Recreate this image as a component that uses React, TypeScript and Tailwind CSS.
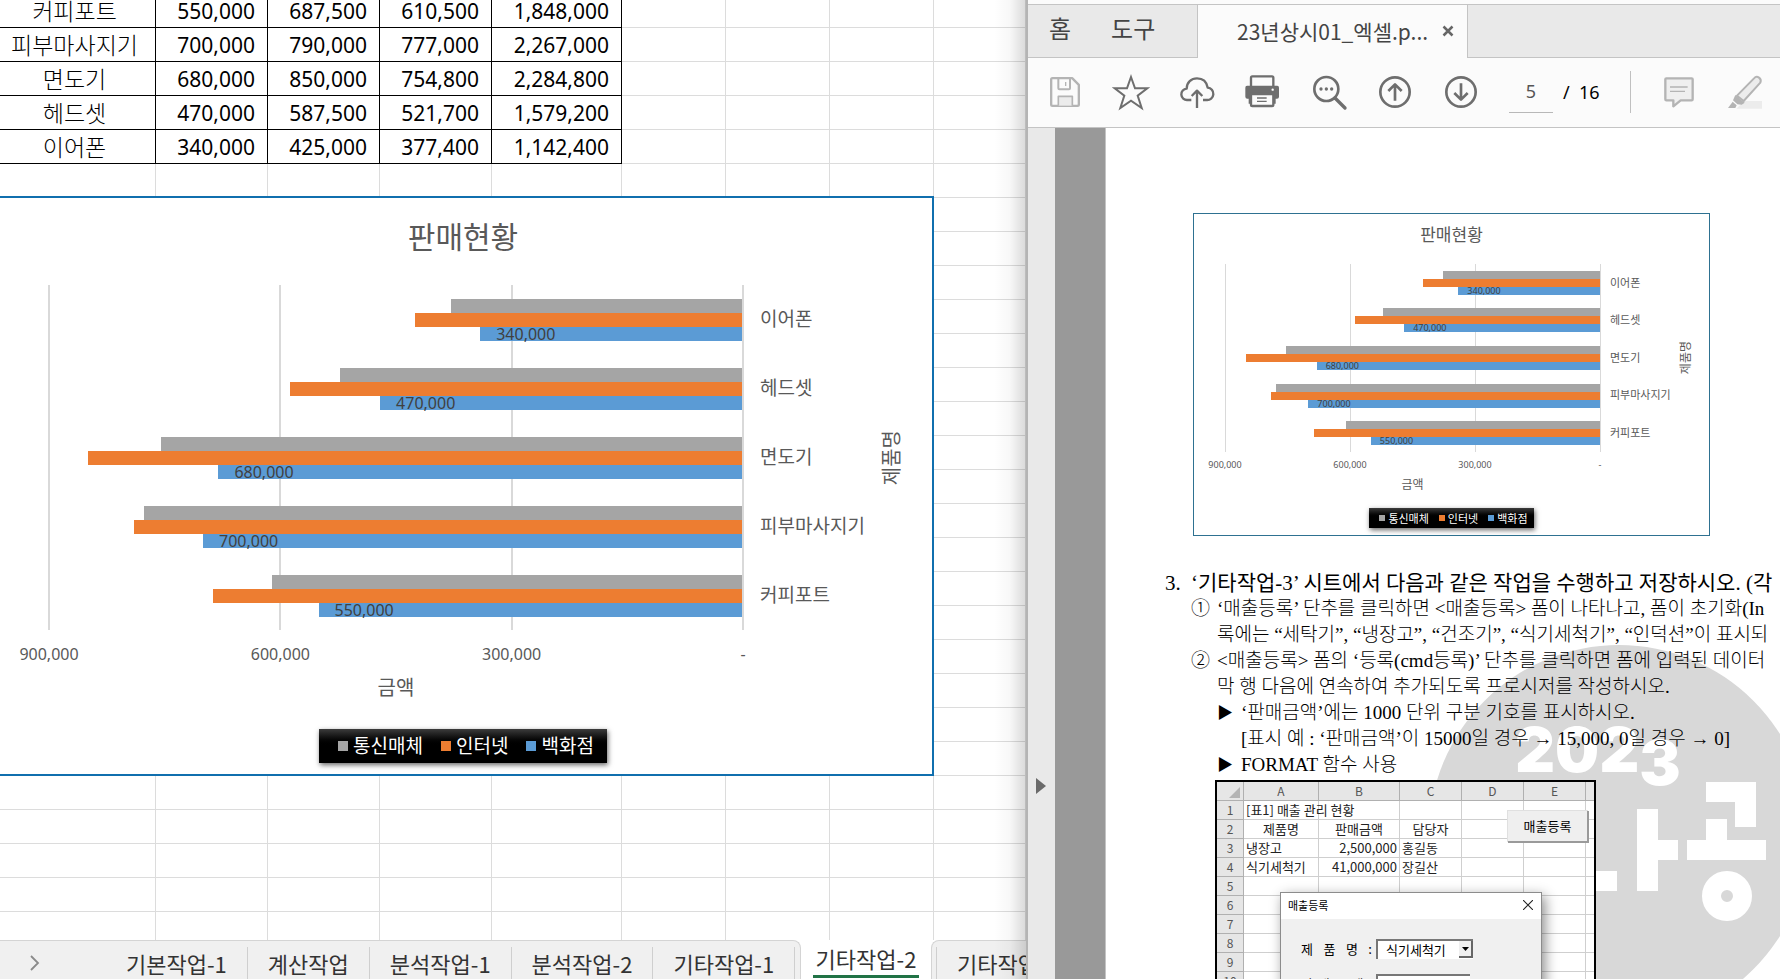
import type { ReactNode } from 'react'
import clsx from 'clsx'

const SANS = "font-['Noto_Sans_CJK_KR',sans-serif]"
const UI = "font-['Noto_Sans','Noto_Sans_CJK_KR',sans-serif]"
const SERIF = "font-['Liberation_Serif','Noto_Sans_CJK_KR',serif]"

interface Product {
  name: string
  store: number
  internet: number
  telecom: number
}

const products: Product[] = [
  { name: '이어폰', store: 340000, internet: 425000, telecom: 377400 },
  { name: '헤드셋', store: 470000, internet: 587500, telecom: 521700 },
  { name: '면도기', store: 680000, internet: 850000, telecom: 754800 },
  { name: '피부마사지기', store: 700000, internet: 790000, telecom: 777000 },
  { name: '커피포트', store: 550000, internet: 687500, telecom: 610500 },
]

const AXIS_MAX = 900000
const ticks = ['900,000', '600,000', '300,000', '-']
const legend = [
  { label: '통신매체', color: 'bg-[#a5a5a5]' },
  { label: '인터넷', color: 'bg-[#ed7d31]' },
  { label: '백화점', color: 'bg-[#5b9bd5]' },
]

const fmt = (n: number) => n.toLocaleString('en-US')
const pct = (n: number) => `${(n / AXIS_MAX) * 100}%`

const chartSizes = {
  large: {
    frame: 'border-2 border-[#106fae] pb-[11px]',
    title: 'mt-[19px] text-[30px] leading-10',
    body: 'mt-7 pl-[55px]',
    plot: 'h-[345px] w-[694px]',
    line: 'w-0.5',
    bars: 'pr-px',
    bar: 'h-[14px]',
    value: 'pl-4 text-base leading-[14px]',
    category: 'w-[139px] pl-[17px] text-[19px]',
    axisTitle: 'text-xl leading-5',
    ticks: 'mt-[14px] ml-[55px] w-[694px] text-base leading-5',
    xTitle: 'mt-3 ml-[55px] w-[694px] text-xl leading-6',
    legend: 'mt-[29px] h-[34px] gap-[18px] pr-[13px] pl-[19px] text-[19px]',
    item: 'gap-[5px]',
    swatch: 'size-2.5',
  },
  small: {
    frame: 'border border-[#2e7191] pb-[7px]',
    title: 'mt-[9px] text-[17px] leading-6',
    body: 'mt-[17px] pl-[31px]',
    plot: 'h-[188px] w-[375px]',
    line: 'w-px',
    bars: '',
    bar: 'h-2',
    value: 'pl-[9px] text-[9px] leading-2',
    category: 'w-20 pl-2.5 text-[11px]',
    axisTitle: 'text-xs leading-3',
    ticks: 'mt-[7px] ml-[31px] w-[375px] text-[9px] leading-3',
    xTitle: 'mt-[6px] ml-[31px] w-[375px] text-xs leading-4',
    legend: 'mt-[15px] h-5 gap-2.5 pr-[6px] pl-2.5 text-[11px]',
    item: 'gap-[3px]',
    swatch: 'size-1.5',
  },
}

const SalesChart = ({ size }: { size: 'large' | 'small' }) => {
  const s = chartSizes[size]

  return (
    <figure className={clsx('w-full bg-white text-[#595959]', UI, s.frame)}>
      <figcaption className={clsx('text-center', s.title)}>판매현황</figcaption>

      <div className={clsx('flex items-center', s.body)}>
        <div className={clsx('relative shrink-0', s.plot)}>
          <div className="absolute inset-0 flex justify-between">
            {ticks.map((tick) => (
              <div key={tick} className="flex w-0 justify-center">
                <div className={clsx('shrink-0 bg-[#d9d9d9]', s.line)} />
              </div>
            ))}
          </div>
          <div className={clsx('relative flex h-full flex-col', s.bars)}>
            {products.map((p) => (
              <div key={p.name} className="flex flex-1 flex-col items-end justify-center">
                <div className={clsx('bg-[#a5a5a5]', s.bar)} style={{ width: pct(p.telecom) }} />
                <div className={clsx('bg-[#ed7d31]', s.bar)} style={{ width: pct(p.internet) }} />
                <div
                  className={clsx('bg-[#5b9bd5] text-[#404040]', s.bar, s.value)}
                  style={{ width: pct(p.store) }}
                >
                  {fmt(p.store)}
                </div>
              </div>
            ))}
          </div>
        </div>
        <div className={clsx('flex shrink-0 flex-col self-stretch', s.category)}>
          {products.map((p) => (
            <div key={p.name} className="flex flex-1 items-center whitespace-nowrap">
              {p.name}
            </div>
          ))}
        </div>
        <div
          className={clsx(
            'rotate-180 whitespace-nowrap [text-orientation:sideways] [writing-mode:vertical-rl]',
            s.axisTitle,
          )}
        >
          제품명
        </div>
      </div>

      <div className={clsx('flex justify-between', s.ticks)}>
        {ticks.map((tick) => (
          <span key={tick} className="flex w-0 justify-center">
            {tick}
          </span>
        ))}
      </div>
      <div className={clsx('text-center', s.xTitle)}>금액</div>

      <div
        className={clsx(
          'mx-auto flex w-fit items-center bg-linear-to-b from-[#3c3c3c] to-black to-50% text-white shadow-[1px_2px_5px_rgba(0,0,0,0.6)]',
          s.legend,
        )}
      >
        {legend.map((item) => (
          <span key={item.label} className={clsx('flex items-center leading-none', s.item)}>
            <span className={clsx(item.color, s.swatch)} />
            {item.label}
          </span>
        ))}
      </div>
    </figure>
  )
}

/* ---------- spreadsheet ---------- */

const GridCell = ({ children, filled, className }: { children?: ReactNode; filled?: boolean; className?: string }) => (
  <td
    className={clsx(
      'h-[34px] border-r border-b p-0 leading-6',
      filled ? 'border-black text-black' : 'border-[#dcdcdc]',
      className,
    )}
  >
    {children}
  </td>
)

const columnWidths = ['w-[156px]', 'w-28', 'w-28', 'w-28', 'w-[130px]', 'w-[104px]', 'w-[104px]', 'w-[104px]', '']
const dataRows = [...products].reverse()
const blankRows = Array.from({ length: 23 }, (_, i) => i)

const SheetGrid = () => (
  <table className={clsx('-mt-[6px] w-full table-fixed border-separate border-spacing-0', UI)}>
    <colgroup>
      {columnWidths.map((w, i) => (
        <col key={i} className={w} />
      ))}
    </colgroup>
    <tbody>
      {dataRows.map((p) => (
        <tr key={p.name}>
          <GridCell filled className="pr-[6px] text-center text-[23px] font-light whitespace-nowrap">
            {p.name}
          </GridCell>
          {[p.store, p.internet, p.telecom, p.store + p.internet + p.telecom].map((n, i) => (
            <GridCell key={i} filled className="pr-3 text-right text-[21px]">
              {fmt(n)}
            </GridCell>
          ))}
          <GridCell />
          <GridCell />
          <GridCell />
          <GridCell />
        </tr>
      ))}
      {blankRows.map((row) => (
        <tr key={row}>
          {columnWidths.map((_, i) => (
            <GridCell key={i} />
          ))}
        </tr>
      ))}
    </tbody>
  </table>
)

const sheetTabs = ['기본작업-1', '계산작업', '분석작업-1', '분석작업-2', '기타작업-1']

const SheetTabs = () => (
  <nav className={clsx('flex h-[39px] shrink-0 bg-white text-[22px] text-[#333]', SANS)}>
    <div className="flex h-full w-[801px] shrink-0 rounded-tr-lg border-t border-r border-[#d4d4d4] bg-[#f0f0f0] pt-1.5">
      <button aria-label="다음 시트" className="w-[106px] shrink-0 pl-[29px]">
        <svg width="11" height="16" viewBox="0 0 11 16" fill="none" stroke="#8a8a8a" strokeWidth="1.8">
          <path d="M2 1l7 7-7 7" />
        </svg>
      </button>
      {sheetTabs.map((tab) => (
        <button key={tab} className="border-r border-[#cfcfcf] px-5 leading-7 whitespace-nowrap">
          {tab}
        </button>
      ))}
    </div>
    <button className="w-[130px] shrink-0 px-3 pt-1 whitespace-nowrap">
      <span className="block border-b-3 border-[#217346] pb-1 leading-[26px]">기타작업-2</span>
    </button>
    <div className="flex h-full min-w-0 flex-1 rounded-tl-lg border-t border-l border-[#d4d4d4] bg-[#f0f0f0] pt-1.5 pl-1">
      <button className="border-l border-[#cfcfcf] px-5 leading-7 whitespace-nowrap">기타작업-3</button>
    </div>
  </nav>
)

const SpreadsheetWindow = () => (
  <section className="relative flex min-w-0 flex-col overflow-hidden bg-white">
    <div className="relative min-h-0 flex-1 overflow-hidden">
      <SheetGrid />
      <div className="absolute top-[196px] -left-2 w-[942px]">
        <SalesChart size="large" />
      </div>
    </div>
    <SheetTabs />
    <div className="pointer-events-none absolute inset-y-0 right-0 w-8 bg-linear-to-r from-transparent via-black/3 to-black/15" />
  </section>
)

/* ---------- document viewer ---------- */

const Icon = ({ color = '#6e6e6e', children }: { color?: string; children: ReactNode }) => (
  <svg
    width="34"
    height="34"
    viewBox="0 0 102 102"
    className="overflow-visible"
    fill="none"
    stroke={color}
    strokeWidth="7"
    strokeLinejoin="round"
  >
    {children}
  </svg>
)

const tools = [
  {
    label: '저장',
    icon: (
      <Icon color="#b4b4b4">
        <path d="M13.500 9.500h59l20 20v59a4 4 0 0 1-4 4h-75a4 4 0 0 1-4-4v-75a4 4 0 0 1 4-4z" />
        <path d="M31 12v28q0 3 3 3h29q3 0 3-3V12" strokeWidth="6" />
        <path d="M53 21v12" strokeWidth="4" />
        <path d="M31 92V64h42v28" strokeWidth="5" fill="#ececec" />
      </Icon>
    ),
  },
  {
    label: '즐겨찾기',
    icon: (
      <Icon>
        <path
          d="M51 6l12 34h37L71 62l12 37-32-22-32 22 12-37L2 40h37z"
          strokeWidth="6"
          strokeLinejoin="miter"
        />
      </Icon>
    ),
  },
  {
    label: '업로드',
    icon: (
      <Icon>
        <path d="M34 75H22A17 17 0 0 1 20 41C20 22 34 10 51 10C68 10 80 20 83 38A18.500 18.500 0 0 1 80 75H69" />
        <path d="M51 99V48M35 63l16-16 16 16" />
      </Icon>
    ),
  },
  {
    label: '인쇄',
    icon: (
      <Icon>
        <path d="M15 34V8q0-4 4-4h59q4 0 4 4v26" />
        <path d="M3 32h91q5 0 5 6v27q0 6-6 6h-4v15H8V71H4q-6 0-6-6V38q0-6 5-6z" fill="#6e6e6e" stroke="none" />
        <path d="M15 57v32q0 4 4 4h59q4 0 4-4V57z" fill="#fbfbfb" />
        <path d="M33 69h29M33 79h29" strokeWidth="4" />
        <circle cx="80" cy="44" r="3.500" fill="#fff" stroke="none" />
      </Icon>
    ),
  },
  {
    label: '확대/축소',
    icon: (
      <Icon>
        <circle cx="43" cy="42" r="36" strokeWidth="8" />
        <path d="M69 69l30 30" strokeWidth="10" strokeLinecap="round" />
        <g fill="#6e6e6e" stroke="none">
          <circle cx="27" cy="42" r="5" />
          <circle cx="43" cy="42" r="5" />
          <circle cx="59" cy="42" r="5" />
        </g>
      </Icon>
    ),
  },
  {
    label: '이전 페이지',
    icon: (
      <Icon>
        <circle cx="51" cy="51" r="44" strokeWidth="8" />
        <path d="M51 77V29M31 48l20-20 20 20" strokeWidth="8" />
      </Icon>
    ),
  },
  {
    label: '다음 페이지',
    icon: (
      <Icon>
        <circle cx="51" cy="51" r="44" strokeWidth="8" />
        <path d="M51 25v48M31 54l20 20 20-20" strokeWidth="8" />
      </Icon>
    ),
  },
]

const ViewerTabs = () => (
  <div className={clsx('flex h-[54px] shrink-0 border-t border-[#c4c4c4] text-[#444]', SANS)}>
    <div className="flex w-[170px] shrink-0 items-center gap-10 border-r border-b border-[#c4c4c4] bg-[#e9e9e9] pl-[21px] text-2xl leading-none">
      <button className="pb-1.5">홈</button>
      <button className="pb-1.5 whitespace-nowrap">도구</button>
    </div>
    <div className="flex w-[269px] shrink-0 items-center bg-[#fbfbfb] pb-0.5 pl-[39px]">
      <span className="w-[205px] text-[21px] leading-6 whitespace-nowrap">23년상시01_엑셀.p...</span>
      <button aria-label="탭 닫기">
        <svg width="12" height="12" viewBox="0 0 12 12" stroke="#666" strokeWidth="2.500">
          <path d="M1.500 1.500l9 9M10.500 1.500l-9 9" />
        </svg>
      </button>
    </div>
    <div className="flex-1 border-b border-l border-[#c4c4c4] bg-[#e9e9e9]" />
  </div>
)

const Toolbar = () => (
  <div className="flex h-[70px] shrink-0 items-center border-b border-[#c4c4c4] bg-[#fbfbfb] pb-0.5 pl-1">
    {tools.map((tool) => (
      <button key={tool.label} aria-label={tool.label} className="flex w-[66px] shrink-0 justify-center">
        {tool.icon}
      </button>
    ))}
    <label className={clsx('ml-[15px] flex shrink-0 items-center gap-2.5 text-lg text-black', UI)}>
      <input
        aria-label="페이지 번호"
        defaultValue="5"
        className="h-[42px] w-11 border-b border-[#b8b8b8] text-center text-[#555]"
      />
      <span className="w-[67px] whitespace-pre">/  16</span>
    </label>
    <div className="h-[42px] w-px shrink-0 bg-[#c0c0c0]" />
    <button aria-label="메모 추가" className="ml-[15px] flex w-[66px] shrink-0 justify-center">
      <Icon color="#b4b4b4">
        <path d="M13 10h76q3 0 3 3v60q0 3-3 3H56L34 94V76H13q-3 0-3-3V13q0-3 3-3z" fill="#efefef" />
        <path d="M24 36h53M24 49h45" strokeWidth="4" />
      </Icon>
    </button>
    <button aria-label="강조 표시" className="flex w-[66px] shrink-0 justify-center">
      <Icon color="#b4b4b4">
        <path d="M48 78h54v23H25z" fill="#ececec" stroke="none" />
        <path d="M78 10q7-8 15-2t4 15L47 78 27 62z" fill="#ececec" strokeWidth="6" />
        <path d="M22 60l28 23-9 6-13-1-13-12z" fill="#b4b4b4" stroke="none" />
        <path d="M14 80l12 11-4 8H0z" fill="#b4b4b4" stroke="none" />
      </Icon>
    </button>
  </div>
)

const Watermark = () => (
  <div className="absolute top-[517px] left-[323px] size-[380px] rounded-full bg-[#d8d8d8]">
    <svg width="380" height="380" viewBox="0 0 380 380" fill="#fff">
      <rect x="120" y="226" width="68" height="20" />
      <rect x="208" y="164" width="21" height="82" />
      <rect x="229" y="195" width="20" height="20" />
      <rect x="277" y="137" width="50" height="20" />
      <rect x="306" y="137" width="21" height="45" />
      <rect x="277" y="174" width="21" height="22" />
      <rect x="258" y="195" width="79" height="20" />
      <circle cx="298" cy="251" r="15.500" fill="none" stroke="#fff" strokeWidth="19" />
    </svg>
    <div className="absolute top-[73px] left-[86px] font-['Inter',sans-serif] text-[62px] leading-[64px] font-black text-white">
      202<span className="align-sub">3</span>
    </div>
  </div>
)

const sheetColumns = ['A', 'B', 'C', 'D', 'E']
const miniRows = [
  ['[표1] 매출 관리 현황', '', ''],
  ['제품명', '판매금액', '담당자'],
  ['냉장고', '2,500,000', '홍길동'],
  ['식기세척기', '41,000,000', '장길산'],
  ...Array.from({ length: 7 }, () => ['', '', '']),
]

const MiniSheet = () => (
  <div className={clsx('relative w-[381px] border-2 border-black bg-white', SANS)}>
    <table className="w-full table-fixed border-separate border-spacing-0 text-[13px] leading-4 text-[#222]">
      <colgroup>
        <col className="w-[27px]" />
        <col className="w-[75px]" />
        <col className="w-[81px]" />
        <col className="w-[62px]" />
        <col className="w-[62px]" />
        <col className="w-[62px]" />
        <col />
      </colgroup>
      <thead className="bg-[#e6e6e6] text-xs text-[#555]">
        <tr>
          <th className="h-[19px] border-r border-b border-[#b0b0b0] p-0">
            <svg width="26" height="17" viewBox="0 0 26 17" className="block">
              <path d="M23 4v11H12z" fill="#b4b4b4" />
            </svg>
          </th>
          {sheetColumns.map((c) => (
            <th key={c} className="border-r border-b border-[#b0b0b0] p-0 font-normal">
              {c}
            </th>
          ))}
          <th className="border-b border-[#b0b0b0] p-0" />
        </tr>
      </thead>
      <tbody>
        {miniRows.map((cells, row) => (
          <tr key={row}>
            <th className="h-[19px] border-r border-b border-[#b0b0b0] bg-[#e6e6e6] p-0 text-xs font-normal text-[#555]">
              {row + 1}
            </th>
            {cells.map((cell, col) => (
              <td
                key={col}
                className={clsx(
                  'border-r border-b border-[#cfcfcf] px-0.5 py-0 whitespace-nowrap',
                  row === 1 && 'text-center',
                  row > 1 && col === 1 && 'text-right',
                )}
              >
                {cell}
              </td>
            ))}
            <td className="border-r border-b border-[#cfcfcf]" />
            <td className="border-r border-b border-[#cfcfcf]" />
            <td className="border-b border-[#cfcfcf]" />
          </tr>
        ))}
      </tbody>
    </table>

    <button className="absolute top-[29px] right-[5px] h-8 w-[81px] border-r-2 border-b-2 border-[#9a9a9a] bg-[#efefef] text-[13px] text-black shadow-[-1px_-1px_0_#e0e0e0]">
      매출등록
    </button>

    <div className="absolute top-[110px] left-[63px] w-[262px] border border-[#8c8c8c] bg-[#f0f0f0] text-black shadow-[3px_4px_12px_rgba(0,0,0,0.45)]">
      <div className="flex h-[26px] items-center justify-between bg-white pr-2 pb-0.5 pl-[7px] text-[11px]">
        매출등록
        <button aria-label="닫기">
          <svg width="10" height="10" viewBox="0 0 10 10" stroke="#222" strokeWidth="1.100">
            <path d="M0 0l10 10M10 0L0 10" />
          </svg>
        </button>
      </div>
      <div className="flex flex-col gap-[14px] pt-5 pl-5 text-[13px] leading-5">
        <div className="flex gap-1">
          <label htmlFor="product" className="flex w-[71px] justify-between">
            <span>제</span>
            <span>품</span>
            <span>명</span>
            <span>:</span>
          </label>
          <div className="relative">
            <select
              id="product"
              className="h-5 w-[97px] appearance-none border-t-2 border-l-2 border-[#777] bg-white pl-2 leading-4"
            >
              <option>식기세척기</option>
            </select>
            <span className="pointer-events-none absolute inset-y-0.5 right-0 flex w-[14px] items-center justify-center border-r-2 border-b-2 border-[#666] bg-[#efefef]">
              <svg width="7" height="4" viewBox="0 0 7 4">
                <path d="M0 0h7L3.500 4z" fill="#000" />
              </svg>
            </span>
          </div>
        </div>
        <div className="flex gap-1">
          <label htmlFor="amount" className="flex w-[71px] justify-between">
            <span>판</span>
            <span>매</span>
            <span>금</span>
            <span>액</span>
            <span>:</span>
          </label>
          <input
            id="amount"
            defaultValue="41000000"
            className="h-5 w-[94px] border-t-2 border-l-2 border-[#777] bg-white pl-2"
          />
        </div>
      </div>
    </div>
  </div>
)

const DocumentPage = () => (
  <article className="relative min-w-0 flex-1 overflow-hidden border-l border-[#c4c4c4] bg-white">
    <Watermark />
    <div className="relative pt-[85px] pl-[59px]">
      <div className="ml-7 w-[517px]">
        <SalesChart size="small" />
      </div>

      <div className={clsx('mt-[34px] text-[19px] leading-[26px] font-light whitespace-nowrap text-black', SERIF)}>
        <h2 className="flex text-[21px] leading-[26px] font-normal">
          <span className="w-[26px] shrink-0">3.</span>
          ‘기타작업-3’ 시트에서 다음과 같은 작업을 수행하고 저장하시오. (각
        </h2>
        <ol className="pl-[26px]">
          <li className="flex">
            <span className="w-[26px] shrink-0">①</span>
            <p>
              ‘매출등록’ 단추를 클릭하면 &lt;매출등록&gt; 폼이 나타나고, 폼이 초기화(In
              <br />
              록에는 “세탁기”, “냉장고”, “건조기”, “식기세척기”, “인덕션”이 표시되
            </p>
          </li>
          <li className="flex">
            <span className="w-[26px] shrink-0">②</span>
            <div>
              <p>
                &lt;매출등록&gt; 폼의 ‘등록(cmd등록)’ 단추를 클릭하면 폼에 입력된 데이터
                <br />막 행 다음에 연속하여 추가되도록 프로시저를 작성하시오.
              </p>
              <ul>
                <li className="flex">
                  <span className="w-6 shrink-0 text-base leading-[26px]">▶</span>
                  <p>
                    ‘판매금액’에는 1000 단위 구분 기호를 표시하시오.
                    <br />
                    [표시 예 : ‘판매금액’이 15000일 경우 → 15,000, 0일 경우 → 0]
                  </p>
                </li>
                <li className="flex">
                  <span className="w-6 shrink-0 text-base leading-[26px]">▶</span>
                  <p>FORMAT 함수 사용</p>
                </li>
              </ul>
            </div>
          </li>
        </ol>
      </div>

      <div className="mt-0.5 ml-[50px]">
        <MiniSheet />
      </div>
    </div>
  </article>
)

const DocumentWindow = () => (
  <section className="flex min-w-0 flex-col overflow-hidden border-l-2 border-[#b4b4b4] bg-[#fbfbfb] pt-1">
    <ViewerTabs />
    <Toolbar />
    <div className="flex min-h-0 flex-1 overflow-hidden">
      <div className="w-[27px] shrink-0 bg-[#e9e9e9] pt-[650px] pl-2">
        <button aria-label="패널 열기" className="block">
          <svg width="10" height="16" viewBox="0 0 10 16">
            <path d="M0 0l10 8-10 8z" fill="#6a6a6a" />
          </svg>
        </button>
      </div>
      <div className="w-[50px] shrink-0 bg-[#999]" />
      <DocumentPage />
    </div>
  </section>
)

export default function App() {
  return (
    <main className="grid h-screen grid-cols-[1026fr_754fr] overflow-hidden bg-white">
      <SpreadsheetWindow />
      <DocumentWindow />
    </main>
  )
}
